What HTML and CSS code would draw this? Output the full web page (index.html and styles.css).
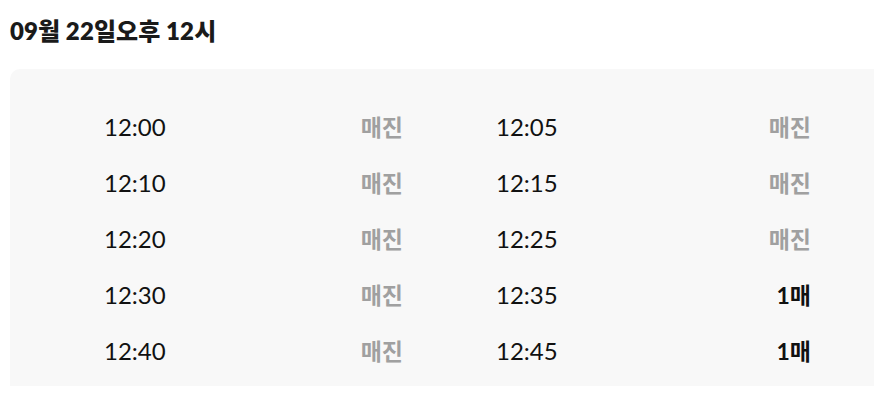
FILE: index.html
```html
<!DOCTYPE html>
<html lang="ko">
<head>
<meta charset="utf-8">
<link rel="stylesheet" href="styles.css">
</head>
<body>
<h2 class="title">09월 22일오후 12시</h2>
<div class="panel">
  <div class="grid">
    <div class="slot"><span class="time">12:00</span><span class="status sold">매진</span></div>
    <div class="slot"><span class="time">12:05</span><span class="status sold">매진</span></div>
    <div class="slot"><span class="time">12:10</span><span class="status sold">매진</span></div>
    <div class="slot"><span class="time">12:15</span><span class="status sold">매진</span></div>
    <div class="slot"><span class="time">12:20</span><span class="status sold">매진</span></div>
    <div class="slot"><span class="time">12:25</span><span class="status sold">매진</span></div>
    <div class="slot"><span class="time">12:30</span><span class="status sold">매진</span></div>
    <div class="slot"><span class="time">12:35</span><span class="status">1매</span></div>
    <div class="slot"><span class="time">12:40</span><span class="status sold">매진</span></div>
    <div class="slot"><span class="time">12:45</span><span class="status">1매</span></div>
  </div>
</div>
</body>
</html>
```
FILE: styles.css
```css
html, body {
  margin: 0;
  padding: 0;
  background: #ffffff;
  font-family: Lato, "Noto Sans CJK KR", sans-serif;
  color: #111111;
  overflow: hidden;
}
.title {
  margin: 0;
  padding: 13px 0 0 10px;
  font-size: 24px;
  font-weight: 800;
  line-height: 36px;
  letter-spacing: 0.1px;
  color: #1a1a1a;
}
.panel {
  margin: 20px 0 0 10px;
  width: 900px;
  background: #f8f8f8;
  border-radius: 10px 0 0 0;
  padding: 29px 0 8px 94px;
  box-sizing: border-box;
}
.grid {
  display: grid;
  grid-template-columns: 299px 315px;
  column-gap: 93px;
}
.slot {
  display: flex;
  justify-content: space-between;
  align-items: center;
  height: 56px;
}
.time {
  font-size: 24px;
  font-weight: 400;
  color: #111111;
}
.status {
  font-size: 23px;
  font-weight: 700;
  color: #111111;
}
.status.sold {
  color: #a0a0a0;
}
```
